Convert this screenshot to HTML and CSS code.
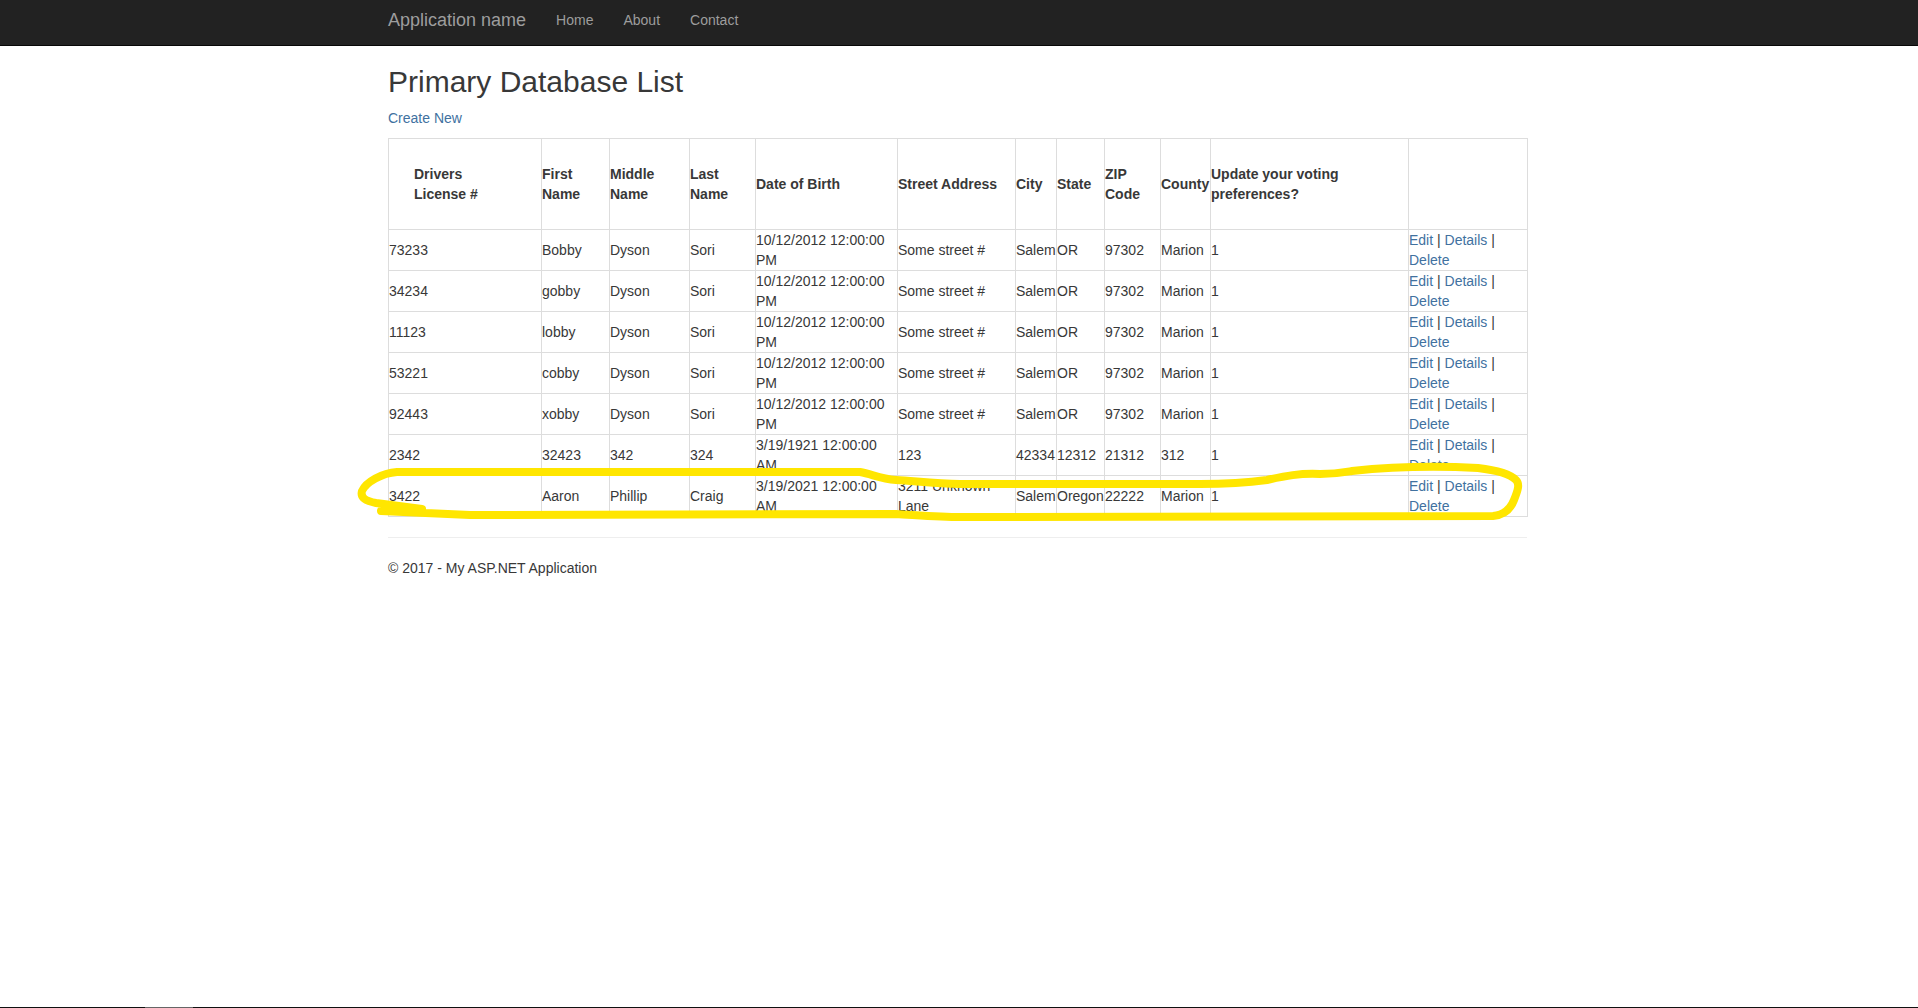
FILE: index.html
```html
<!DOCTYPE html>
<html lang="en">

<head>
    <meta charset="UTF-8">
    <meta name="viewport" content="width=device-width, initial-scale=1.0">
    <title>Primary Database List</title>
    <link rel="stylesheet" href="styles.css">
</head>

<body>
    <div class="page">
        <nav class="navbar">
            <div class="container navbar-inner">
                <a class="brand" href="#">Application name</a>
                <a class="nav-link" href="#">Home</a>
                <a class="nav-link" href="#">About</a>
                <a class="nav-link" href="#">Contact</a>
            </div>
        </nav>

        <div class="container body-content">
            <h2>Primary Database List</h2>
            <p class="create"><a href="#">Create New</a></p>

            <table class="voters">
                <thead>
                    <tr>
                        <th class="license">Drivers License #</th>
                        <th>First Name</th>
                        <th>Middle Name</th>
                        <th>Last Name</th>
                        <th>Date of Birth</th>
                        <th>Street Address</th>
                        <th>City</th>
                        <th>State</th>
                        <th>ZIP Code</th>
                        <th>County</th>
                        <th>Update your voting preferences?</th>
                        <th></th>
                    </tr>
                </thead>
                <tbody>
                    <tr>
                        <td>73233</td><td>Bobby</td><td>Dyson</td><td>Sori</td>
                        <td>10/12/2012 12:00:00 PM</td><td>Some street #</td><td>Salem</td><td>OR</td>
                        <td>97302</td><td>Marion</td><td>1</td>
                        <td><a href="#">Edit</a> | <a href="#">Details</a> | <a href="#">Delete</a></td>
                    </tr>
                    <tr>
                        <td>34234</td><td>gobby</td><td>Dyson</td><td>Sori</td>
                        <td>10/12/2012 12:00:00 PM</td><td>Some street #</td><td>Salem</td><td>OR</td>
                        <td>97302</td><td>Marion</td><td>1</td>
                        <td><a href="#">Edit</a> | <a href="#">Details</a> | <a href="#">Delete</a></td>
                    </tr>
                    <tr>
                        <td>11123</td><td>lobby</td><td>Dyson</td><td>Sori</td>
                        <td>10/12/2012 12:00:00 PM</td><td>Some street #</td><td>Salem</td><td>OR</td>
                        <td>97302</td><td>Marion</td><td>1</td>
                        <td><a href="#">Edit</a> | <a href="#">Details</a> | <a href="#">Delete</a></td>
                    </tr>
                    <tr>
                        <td>53221</td><td>cobby</td><td>Dyson</td><td>Sori</td>
                        <td>10/12/2012 12:00:00 PM</td><td>Some street #</td><td>Salem</td><td>OR</td>
                        <td>97302</td><td>Marion</td><td>1</td>
                        <td><a href="#">Edit</a> | <a href="#">Details</a> | <a href="#">Delete</a></td>
                    </tr>
                    <tr>
                        <td>92443</td><td>xobby</td><td>Dyson</td><td>Sori</td>
                        <td>10/12/2012 12:00:00 PM</td><td>Some street #</td><td>Salem</td><td>OR</td>
                        <td>97302</td><td>Marion</td><td>1</td>
                        <td><a href="#">Edit</a> | <a href="#">Details</a> | <a href="#">Delete</a></td>
                    </tr>
                    <tr>
                        <td>2342</td><td>32423</td><td>342</td><td>324</td>
                        <td>3/19/1921 12:00:00 AM</td><td>123</td><td>42334</td><td>12312</td>
                        <td>21312</td><td>312</td><td>1</td>
                        <td><a href="#">Edit</a> | <a href="#">Details</a> | <a href="#">Delete</a></td>
                    </tr>
                    <tr>
                        <td>3422</td><td>Aaron</td><td>Phillip</td><td>Craig</td>
                        <td>3/19/2021 12:00:00 AM</td><td>3211 Unknown Lane</td><td>Salem</td><td>Oregon</td>
                        <td>22222</td><td>Marion</td><td>1</td>
                        <td><a href="#">Edit</a> | <a href="#">Details</a> | <a href="#">Delete</a></td>
                    </tr>
                </tbody>
            </table>

            <hr>
            <footer>
                <p>&copy; 2017 - My ASP.NET Application</p>
            </footer>
        </div>

        <div class="screen-edge">
            <div class="screen-edge-tab"></div>
        </div>
    </div>

    <!-- yellow marker drawn over the screenshot -->
    <svg class="marker" viewBox="0 0 1918 1008" aria-hidden="true">
        <path d="M860 472 C 700 472 500 472 397 472 C 382 473 366 482 362 491 C 360 498 366 501 376 503 L 422 509
                 L 381 511 L 470 515 L 896 514 C 915 515 940 517 960 517 L 1493 516
                 C 1505 515 1511 508 1514 500 C 1518 490 1520 484 1516 480 C 1510 474 1495 470 1478 468
                 C 1440 466 1390 467 1352 471 C 1340 473 1335 474 1320 474 C 1300 473 1285 476 1267 480
                 C 1245 483 1220 484 1200 484 L 960 484 C 935 484 915 481 896 480 C 880 479 872 474 860 472 Z" />
    </svg>
</body>

</html>
```
FILE: styles.css
```css
* {
    box-sizing: border-box;
}

body {
    margin: 0;
    font-family: "Liberation Sans", Arial, sans-serif;
    font-size: 14px;
    line-height: 20px;
    color: #383838;
    background-color: #fff;
}

a {
    color: #41719f;
    text-decoration: none;
}

.page {
    min-height: 100vh;
    display: flex;
    flex-direction: column;
}

.container {
    width: 1170px;
    margin: 0 auto;
    padding: 0 15px;
}

.navbar {
    height: 46px;
    background-color: #222;
    border-bottom: 1px solid #080808;
}

.navbar-inner {
    display: flex;
    align-items: center;
    height: 100%;
    padding-left: 14px;
    padding-bottom: 5px;
}

.brand {
    font-size: 18px;
    color: #9d9d9d;
    margin-right: 15px;
}

.nav-link {
    color: #9d9d9d;
    padding: 0 15px;
}

.body-content {
    padding-left: 14px;
    padding-right: 17px;
}

h2 {
    margin: 19px 0 10px;
    font-size: 30px;
    font-weight: 500;
    line-height: 33px;
}

.create {
    margin: 0 0 10px;
}

.voters {
    width: 1139px;
    table-layout: fixed;
    border-collapse: collapse;
    margin-bottom: 20px;
}

.voters th,
.voters td {
    padding: 0;
    border: 1px solid #ddd;
    text-align: left;
    vertical-align: middle;
}

.voters th.license {
    padding: 25px;
}

.voters td {
    height: 41px;
}

.voters th:nth-child(1) { width: 153px; }
.voters th:nth-child(2) { width: 68px; }
.voters th:nth-child(3) { width: 80px; }
.voters th:nth-child(4) { width: 66px; }
.voters th:nth-child(5) { width: 142px; }
.voters th:nth-child(6) { width: 118px; }
.voters th:nth-child(7) { width: 41px; }
.voters th:nth-child(8) { width: 48px; }
.voters th:nth-child(9) { width: 56px; }
.voters th:nth-child(10) { width: 50px; }
.voters th:nth-child(11) { width: 198px; }
.voters th:nth-child(12) { width: 119px; }

hr {
    margin: 20px 0;
    border: 0;
    border-top: 1px solid #eee;
}

footer p {
    margin: 0 0 10px;
}

.screen-edge {
    margin-top: auto;
    height: 1px;
    background-color: #111;
}

.screen-edge-tab {
    width: 48px;
    height: 1px;
    margin-left: 145px;
    background-color: #666;
}

.marker {
    position: absolute;
    top: 0;
    left: 0;
    width: 1918px;
    height: 1008px;
    pointer-events: none;
}

.marker path {
    fill: none;
    stroke: #ffe600;
    stroke-width: 8;
    stroke-linecap: round;
    stroke-linejoin: round;
}
```
